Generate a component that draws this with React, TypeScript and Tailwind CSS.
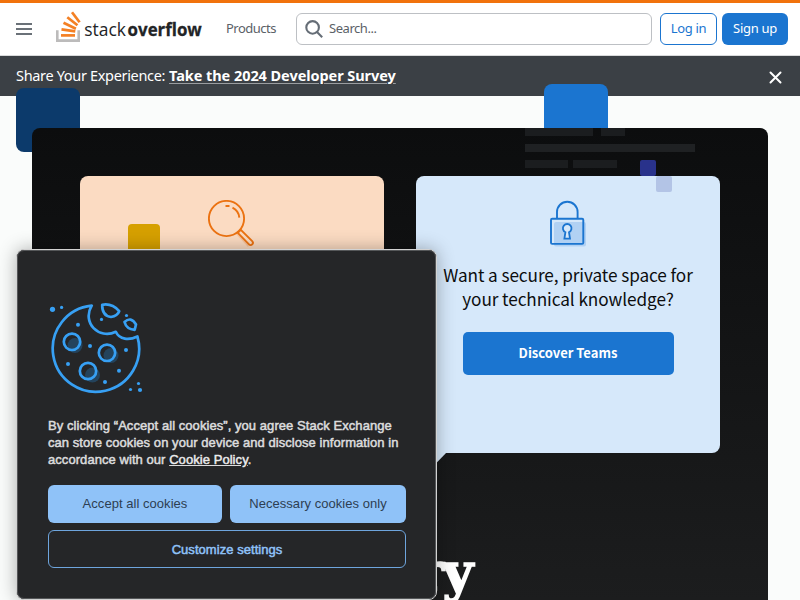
import React from "react";

function LogoMark() {
  return (
    <div className="flex h-[34px] w-[150px] shrink-0 items-start">
      <svg width="150" height="34" viewBox="0 0 150 34" className="block shrink-0 overflow-visible">
        <path d="M1.3 20.2v10.4h21.4V20.2" fill="none" stroke="#bcbbbb" strokeWidth="2.6" />
        <g stroke="#f48024" strokeWidth="2.7" fill="none">
          <path d="M5 25.4h14" />
          <path d="M5.5 19.3l13.8 2.1" />
          <path d="M7.5 12.8l12.4 6" />
          <path d="M11.3 7.2l10.2 8.1" />
          <path d="M16 2.2l7.6 10" />
        </g>
        <text x="28.3" y="26.4" fontSize="19" fill="#222426" fontFamily="'Open Sans', sans-serif" textLength="41.7" lengthAdjust="spacingAndGlyphs">stack</text>
        <text x="71.6" y="26.4" fontSize="18.5" fill="#222426" stroke="#222426" strokeWidth=".3" fontFamily="'Open Sans', sans-serif" fontWeight="700" textLength="74.2" lengthAdjust="spacingAndGlyphs">overflow</text>
      </svg>
    </div>
  );
}

function Header() {
  return (
    <header className="flex h-14 items-center border-t-[3px] border-b border-t-[#f1720c] border-b-[#d9dadb] bg-white pl-4 pr-3 text-[13px] text-[#5b6167]">
      <div className="flex w-4 flex-col gap-[3px]">
        <span className="h-[2px] bg-[#6a7178]" />
        <span className="h-[2px] bg-[#6a7178]" />
        <span className="h-[2px] bg-[#6a7178]" />
      </div>
      <div className="-mt-1 ml-6"><LogoMark /></div>
      <span className="ml-5 w-[70px] tracking-[-0.5px]">Products</span>
      <div className="flex h-8 w-[356px] items-center rounded-md border border-[#bdc0c4] pl-2">
        <svg width="18" height="18" viewBox="0 0 18 18" fill="none" stroke="#656d76" strokeWidth="2.1">
          <circle cx="7.6" cy="7.4" r="6.3" />
          <path d="M12 12l5.2 5.2" />
        </svg>
        <span className="ml-1.5 tracking-[-0.45px]">Search...</span>
      </div>
      <button className="ml-2 h-8 w-[57px] rounded-md border border-[#1b75d0] tracking-[-0.3px] text-[#1b75d0]">Log in</button>
      <button className="ml-[5px] h-8 w-[66px] rounded-md bg-[#1b75d0] tracking-[-0.3px] text-white">Sign up</button>
    </header>
  );
}

function Announcement() {
  return (
    <div className="flex h-10 items-center justify-between bg-[#3b4045] px-4 text-[14.5px] text-white">
      <p className="flex whitespace-pre">
        <span className="w-[153px] tracking-[-0.33px]">Share Your Experience: </span>
        <a className="font-bold tracking-[-0.06px] underline decoration-[#9a9da0] underline-offset-2">Take the 2024 Developer Survey</a>
      </p>
      <svg width="13" height="13" viewBox="0 0 13 13" className="mr-[2px] mt-[2px]" stroke="#fff" strokeWidth="2" strokeLinecap="round">
        <path d="M1.5 1.5l10 10M11.5 1.5l-10 10" />
      </svg>
    </div>
  );
}

function SearchArt() {
  return (
    <svg width="48" height="48" viewBox="0 0 48 48" fill="none" stroke="#eb7211" strokeWidth="1.9">
      <path d="M28 34l4-3 10 12-2 4z" fill="#f6b98c" stroke="none" opacity=".7" />
      <circle cx="18.5" cy="18.5" r="17.6" />
      <path d="M17.5 6h4M24.5 7.6q6.3 3.2 6.8 10" />
      <path d="M29.8 32.8l3-3 11.4 11.4a2.2 2.2 0 0 1-3.2 3.2z" fill="#fbdbc2" />
    </svg>
  );
}

function LockArt() {
  return (
    <svg width="38" height="48" viewBox="0 0 38 48" fill="none" stroke="#1b75d0" strokeWidth="1.9">
      <rect x="5" y="22" width="32" height="24.5" rx="2" fill="#b1d1f3" stroke="none" />
      <path d="M8 18.5V12a10.3 10.3 0 0 1 20.6 0v6.5" />
      <rect x="2" y="18.7" width="32.3" height="25.2" rx="1.2" />
      <path d="M16.4 32.2a4.3 4.3 0 1 1 3.6 0l1 6.4h-5.6z" fill="#d6e8fa" strokeWidth="1.8" />
    </svg>
  );
}

function CookieArt() {
  return (
    <svg width="96" height="96" viewBox="0 0 96 96" fill="none" stroke="#37a0f4" strokeWidth="2.7" strokeLinejoin="round">
      <g fill="#24435c" stroke="none">
        <circle cx="27" cy="47.5" r="7.5" />
        <circle cx="63" cy="57.5" r="7.5" />
        <circle cx="44.5" cy="77" r="7.5" />
      </g>
      <path d="M43.7 7.6A43.2 43.2 0 1 0 89.4 38.5C81 42.5 71.5 41.8 67.8 33.8C51 42 33.5 24.5 43.7 7.6Z" />
      <circle cx="24" cy="43.8" r="8.2" />
      <circle cx="59" cy="54.8" r="8.2" />
      <circle cx="40" cy="73" r="8.2" />
      <path d="M54.2 6.8Q64 5 71.2 13.2Q69.5 17.8 63 19Q54 18 54.2 6.8Z" />
      <path d="M76.5 24Q83 18 88 26.5L86.7 31.8Q78.5 31.3 76.5 24Z" />
      <g fill="#37a0f4" stroke="none">
        <circle cx="4.5" cy="11.3" r="2.6" /><circle cx="13.6" cy="9.4" r="1.6" />
        <circle cx="30" cy="26.7" r="2" /><circle cx="53.5" cy="21.4" r="1.6" />
        <circle cx="78.5" cy="17.5" r="1.6" /><circle cx="42" cy="48" r="2" />
        <circle cx="78" cy="52" r="2" /><circle cx="20" cy="66" r="2" />
        <circle cx="71" cy="72.8" r="2" /><circle cx="57" cy="84" r="2" />
        <circle cx="82.5" cy="91.5" r="1.6" /><circle cx="90.5" cy="85.5" r="1.6" />
        <circle cx="92" cy="92" r="2.1" />
      </g>
    </svg>
  );
}

function CookieDialog() {
  return (
    <section className="absolute left-4 top-[249px] flex h-[351px] w-[421px] flex-col rounded-lg border border-[#d2d2d2] bg-[#252628] px-[31px] pt-[48px] font-['Liberation_Sans',Arial,sans-serif] text-[13px] shadow-[0_0_18px_rgba(0,0,0,0.3)] outline outline-1 -outline-offset-2 outline-[#555759]">
      <CookieArt />
      <p className="mt-[23px] whitespace-nowrap leading-[17px] tracking-[0.06px] text-[#dcdcdd] [-webkit-text-stroke:0.5px_#dcdcdd]">
        By clicking “Accept all cookies”, you agree Stack Exchange<br />
        can store cookies on your device and disclose information in<br />
        accordance with our <a className="text-white underline">Cookie Policy</a>.
      </p>
      <div className="mt-[17px] flex gap-2 tracking-[0.04px] text-[#2d3e52]">
        <button className="h-[38px] w-[174px] shrink-0 rounded-md bg-[#8fc2f8]">Accept all cookies</button>
        <button className="h-[38px] w-[176px] shrink-0 rounded-md bg-[#8fc2f8]">Necessary cookies only</button>
      </div>
      <button className="mt-[7px] h-[38px] w-[358px] rounded-md border border-[#6ea5dd] pt-px tracking-[0.05px] text-[#8fc2f8] [-webkit-text-stroke:0.5px_#8fc2f8]">Customize settings</button>
    </section>
  );
}

function Hero() {
  return (
    <main className="relative h-[504px] bg-[#fafcfb] px-8 pt-8">
      <div className="absolute -top-2 left-4 size-16 rounded-lg bg-[#0c3a6b]" />
      <div className="absolute -top-3 left-[544px] size-16 rounded-lg bg-[#1b75d0]" />
      <div className="relative h-[472px] rounded-t-lg bg-linear-to-b from-[#0c0d0e] to-[#1c1d1e] px-12 pt-12">
        <div className="absolute left-[493px] top-0 w-[170px]">
          <div className="flex h-2 gap-2"><span className="w-[68px] bg-[#1b1d1f]" /><span className="w-[24px] bg-[#1b1d1f]" /></div>
          <div className="mt-2 h-2 bg-[#1f2123]" />
          <div className="mt-2 flex h-2 gap-[5px]"><span className="w-[43px] bg-[#1b1d1f]" /><span className="w-[44px] bg-[#1b1d1f]" /></div>
        </div>
        <div className="absolute left-[608px] top-8 size-4 rounded-[2px] bg-[#29328b]" />
        <div className="grid grid-cols-2 gap-8">
          <div className="relative flex h-[277px] justify-center rounded-lg bg-[#fbdbc2] pt-6">
            <div className="absolute left-12 top-12 size-8 rounded bg-[#d6a000]" />
            <SearchArt />
          </div>
          <div className="relative flex h-[277px] flex-col items-center rounded-lg bg-[#d6e8fa] pt-6">
            <div className="absolute left-60 top-0 size-4 rounded-[2px] bg-[#b3c4e6]" />
            <svg className="absolute left-0 top-[276px]" width="31" height="32" viewBox="0 0 31 32"><path d="M0 0h31L0 32z" fill="#d6e8fa" /></svg>
            <LockArt />
            <p className="mt-[15px] whitespace-nowrap text-center font-['Noto_Sans_CJK_SC',sans-serif] text-[17.2px] leading-6 tracking-[-0.08px] text-[#0c0d0e]">
              Want a secure, private space for<br />your technical knowledge?
            </p>
            <button className="mt-[21px] h-[43px] w-[211px] rounded-[5px] bg-[#1b75d0] pb-0.5 font-['Noto_Sans_CJK_SC',sans-serif] text-[13px] font-bold text-white">Discover Teams</button>
          </div>
        </div>
        <h1 className="mt-[86px] whitespace-nowrap pr-[11px] text-center font-['DejaVu_Serif',serif] text-[53px] font-bold leading-[64px] tracking-[-2px] text-white [-webkit-text-stroke:1.5px_white]">Every</h1>
      </div>
    </main>
  );
}

export default function App() {
  return (
    <div className="relative h-[600px] w-[800px] overflow-hidden font-['Noto_Sans',sans-serif]">
      <Header />
      <Announcement />
      <Hero />
      <CookieDialog />
    </div>
  );
}
